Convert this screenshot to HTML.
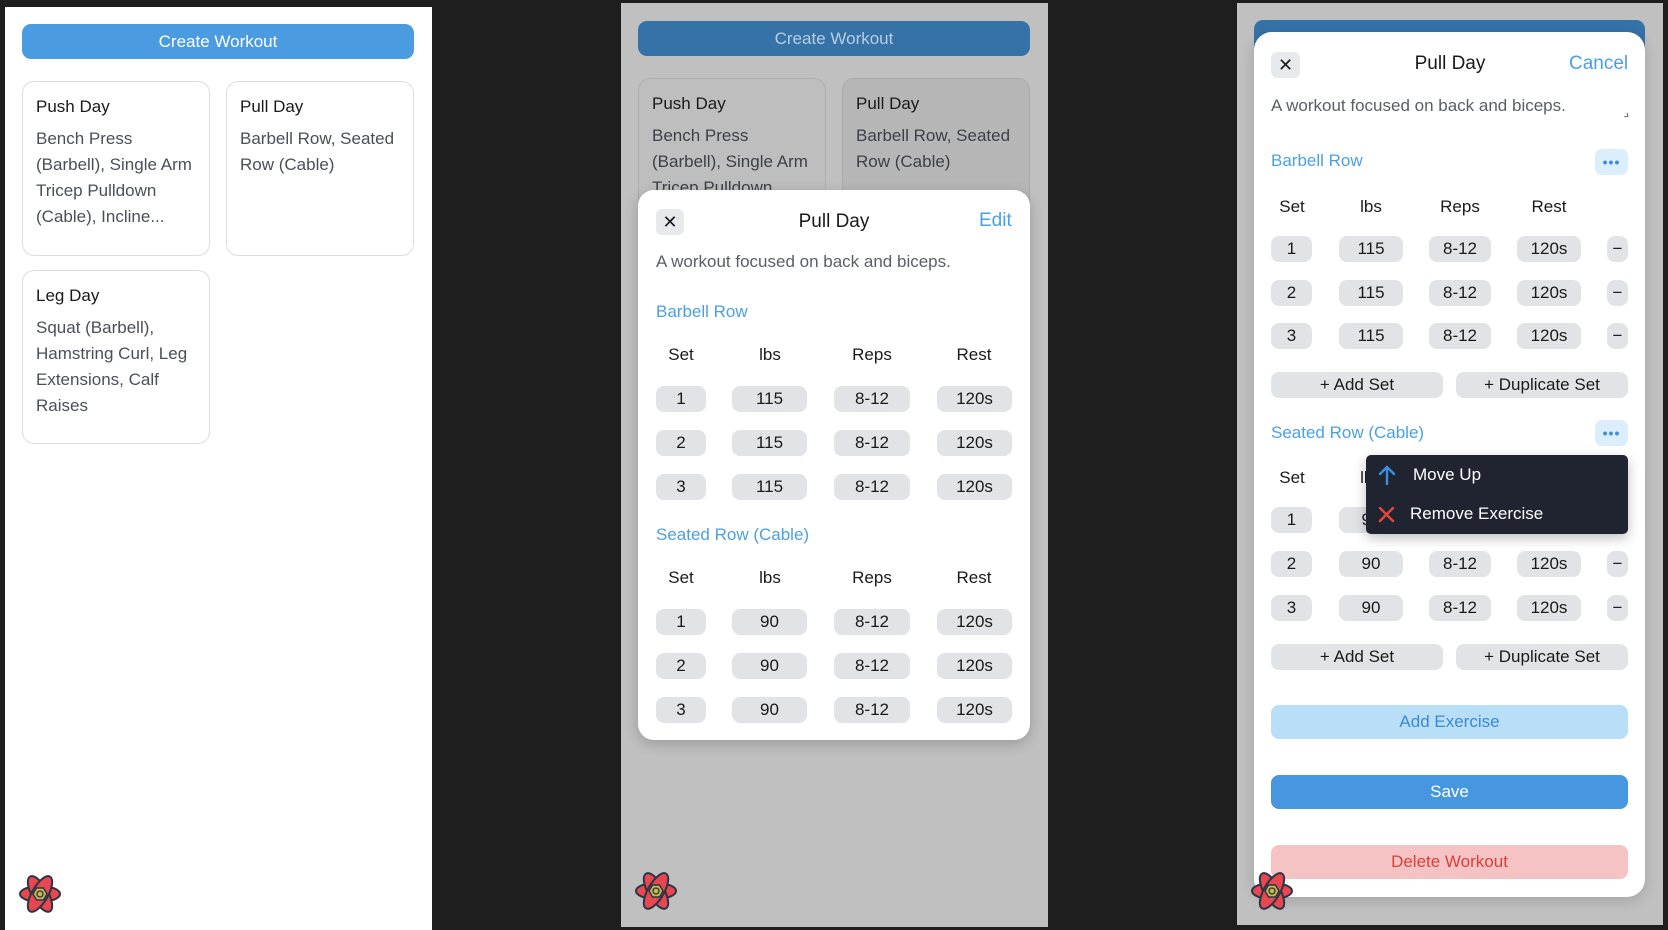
<!DOCTYPE html>
<html><head><meta charset="utf-8">
<style>
*{box-sizing:border-box;margin:0;padding:0}
body{width:1668px;height:930px;background:#1e1e1e;position:relative;overflow:hidden;font-family:"Liberation Sans",sans-serif;font-size:17px;color:#1a1a1a}
.a{position:absolute}
.c{position:absolute;display:flex;align-items:center;justify-content:center}
.pill{position:absolute;display:flex;align-items:center;justify-content:center;background:#e2e3e7;border-radius:8px;height:26px;font-size:17px;color:#1a1a1a}
.hd{position:absolute;font-size:17px;color:#1a1a1a;transform:translateX(-50%)}
.card{position:absolute;border:1.5px solid #dcdde0;border-radius:12px;background:#fff}
.ct{position:absolute;left:13px;top:15px;font-size:17px;color:#1a1a1a}
.cd{position:absolute;left:13px;top:44px;font-size:17px;line-height:26px;color:#4a4f5a;width:170px}
.blue{color:#4aa0e6}
</style></head><body>

<!-- PANEL 1 -->
<div class="a" style="left:5px;top:7px;width:427px;height:923px;background:#fff"></div>
<div class="c" style="left:22px;top:24px;width:392px;height:35px;background:#4a9be0;border-radius:9px;color:#fff;font-size:17px">Create Workout</div>
<div class="card" style="left:22px;top:81px;width:188px;height:175px"><div class="ct">Push Day</div><div class="cd">Bench Press (Barbell), Single Arm Tricep Pulldown (Cable), Incline...</div></div>
<div class="card" style="left:226px;top:81px;width:188px;height:175px"><div class="ct">Pull Day</div><div class="cd">Barbell Row, Seated Row (Cable)</div></div>
<div class="card" style="left:22px;top:270px;width:188px;height:174px"><div class="ct">Leg Day</div><div class="cd">Squat (Barbell), Hamstring Curl, Leg Extensions, Calf Raises</div></div>

<!-- PANEL 2 -->
<div class="a" style="left:621px;top:3px;width:427px;height:924px;background:#c0c0c0"></div>
<div class="c" style="left:638px;top:21px;width:392px;height:35px;background:#3572a8;border-radius:9px;color:#b9cde0;font-size:17px">Create Workout</div>
<div class="card" style="left:638px;top:78px;width:188px;height:175px;background:#bebebe;border-color:#aeaeae"><div class="ct">Push Day</div><div class="cd" style="color:#3c4048">Bench Press (Barbell), Single Arm Tricep Pulldown</div></div>
<div class="card" style="left:842px;top:78px;width:188px;height:175px;background:#b6b6b6;border-color:#aaa"><div class="ct">Pull Day</div><div class="cd" style="color:#3c4048">Barbell Row, Seated Row (Cable)</div></div>
<div class="a" style="left:638px;top:190px;width:392px;height:550px;background:#fff;border-radius:16px;box-shadow:0 4px 14px rgba(0,0,0,.2)"></div>
<div class="c" style="left:656px;top:209px;width:28px;height:26px;background:#e8e9ec;border-radius:6px;font-size:18px">✕</div>
<div class="hd" style="left:834px;top:211px;font-size:19px">Pull Day</div>
<div class="a blue" style="left:979px;top:210px;font-size:19px">Edit</div>
<div class="a" style="left:656px;top:252px;color:#5a5e66">A workout focused on back and biceps.</div>
<div class="a blue" style="left:656px;top:302px">Barbell Row</div>
<div class="hd" style="left:681px;top:345px">Set</div><div class="hd" style="left:770px;top:345px">lbs</div><div class="hd" style="left:872px;top:345px">Reps</div><div class="hd" style="left:974px;top:345px">Rest</div>
<div class="a blue" style="left:656px;top:525px">Seated Row (Cable)</div>
<div class="hd" style="left:681px;top:568px">Set</div><div class="hd" style="left:770px;top:568px">lbs</div><div class="hd" style="left:872px;top:568px">Reps</div><div class="hd" style="left:974px;top:568px">Rest</div>

<div class="pill" style="left:656px;top:386px;width:50px">1</div><div class="pill" style="left:732px;top:386px;width:75px">115</div><div class="pill" style="left:834px;top:386px;width:76px">8-12</div><div class="pill" style="left:937px;top:386px;width:75px">120s</div>
<div class="pill" style="left:656px;top:430px;width:50px">2</div><div class="pill" style="left:732px;top:430px;width:75px">115</div><div class="pill" style="left:834px;top:430px;width:76px">8-12</div><div class="pill" style="left:937px;top:430px;width:75px">120s</div>
<div class="pill" style="left:656px;top:474px;width:50px">3</div><div class="pill" style="left:732px;top:474px;width:75px">115</div><div class="pill" style="left:834px;top:474px;width:76px">8-12</div><div class="pill" style="left:937px;top:474px;width:75px">120s</div>
<div class="pill" style="left:656px;top:609px;width:50px">1</div><div class="pill" style="left:732px;top:609px;width:75px">90</div><div class="pill" style="left:834px;top:609px;width:76px">8-12</div><div class="pill" style="left:937px;top:609px;width:75px">120s</div>
<div class="pill" style="left:656px;top:653px;width:50px">2</div><div class="pill" style="left:732px;top:653px;width:75px">90</div><div class="pill" style="left:834px;top:653px;width:76px">8-12</div><div class="pill" style="left:937px;top:653px;width:75px">120s</div>
<div class="pill" style="left:656px;top:697px;width:50px">3</div><div class="pill" style="left:732px;top:697px;width:75px">90</div><div class="pill" style="left:834px;top:697px;width:76px">8-12</div><div class="pill" style="left:937px;top:697px;width:75px">120s</div>

<!-- PANEL 3 -->
<div class="a" style="left:1237px;top:3px;width:426px;height:922px;background:#c0c0c0"></div>
<div class="a" style="left:1254px;top:20px;width:391px;height:40px;background:#3572a8;border-radius:9px"></div>
<div class="a" style="left:1254px;top:32px;width:391px;height:865px;background:#fff;border-radius:18px;box-shadow:0 4px 14px rgba(0,0,0,.15)"></div>
<div class="c" style="left:1271px;top:52px;width:29px;height:26px;background:#e8e9ec;border-radius:6px;font-size:18px">✕</div>
<div class="hd" style="left:1450px;top:53px;font-size:19px">Pull Day</div>
<div class="a blue" style="left:1569px;top:53px;font-size:19px">Cancel</div>
<div class="a" style="left:1271px;top:96px;color:#5a5e66">A workout focused on back and biceps.</div>
<div class="a" style="left:1624px;top:113px;width:4px;height:4px;border-right:1px solid #666;border-bottom:1px solid #666;transform:rotate(-10deg)"></div>
<div class="a blue" style="left:1271px;top:151px">Barbell Row</div>
<div class="c" style="left:1595px;top:149px;width:33px;height:26px;background:#dcedfc;border-radius:7px;color:#3a8ee0;font-weight:bold;font-size:14px;letter-spacing:1px">•••</div>
<div class="hd" style="left:1292px;top:197px">Set</div><div class="hd" style="left:1371px;top:197px">lbs</div><div class="hd" style="left:1460px;top:197px">Reps</div><div class="hd" style="left:1549px;top:197px">Rest</div>

<div class="pill" style="left:1271px;top:236px;width:41px">1</div><div class="pill" style="left:1339px;top:236px;width:64px">115</div><div class="pill" style="left:1429px;top:236px;width:62px">8-12</div><div class="pill" style="left:1517px;top:236px;width:64px">120s</div><div class="pill" style="left:1607px;top:236px;width:21px">−</div>
<div class="pill" style="left:1271px;top:280px;width:41px">2</div><div class="pill" style="left:1339px;top:280px;width:64px">115</div><div class="pill" style="left:1429px;top:280px;width:62px">8-12</div><div class="pill" style="left:1517px;top:280px;width:64px">120s</div><div class="pill" style="left:1607px;top:280px;width:21px">−</div>
<div class="pill" style="left:1271px;top:323px;width:41px">3</div><div class="pill" style="left:1339px;top:323px;width:64px">115</div><div class="pill" style="left:1429px;top:323px;width:62px">8-12</div><div class="pill" style="left:1517px;top:323px;width:64px">120s</div><div class="pill" style="left:1607px;top:323px;width:21px">−</div>
<div class="pill" style="left:1271px;top:372px;width:172px">+ Add Set</div><div class="pill" style="left:1456px;top:372px;width:172px">+ Duplicate Set</div>

<div class="a blue" style="left:1271px;top:423px">Seated Row (Cable)</div>
<div class="c" style="left:1595px;top:420px;width:33px;height:26px;background:#dcedfc;border-radius:7px;color:#3a8ee0;font-weight:bold;font-size:14px;letter-spacing:1px">•••</div>
<div class="hd" style="left:1292px;top:468px">Set</div><div class="hd" style="left:1371px;top:468px">lbs</div>
<div class="pill" style="left:1271px;top:507px;width:41px">1</div><div class="pill" style="left:1339px;top:507px;width:64px">90</div>
<div class="pill" style="left:1271px;top:551px;width:41px">2</div><div class="pill" style="left:1339px;top:551px;width:64px">90</div><div class="pill" style="left:1429px;top:551px;width:62px">8-12</div><div class="pill" style="left:1517px;top:551px;width:64px">120s</div><div class="pill" style="left:1607px;top:551px;width:21px">−</div>
<div class="pill" style="left:1271px;top:595px;width:41px">3</div><div class="pill" style="left:1339px;top:595px;width:64px">90</div><div class="pill" style="left:1429px;top:595px;width:62px">8-12</div><div class="pill" style="left:1517px;top:595px;width:64px">120s</div><div class="pill" style="left:1607px;top:595px;width:21px">−</div>
<div class="pill" style="left:1271px;top:644px;width:172px">+ Add Set</div><div class="pill" style="left:1456px;top:644px;width:172px">+ Duplicate Set</div>

<div class="a" style="left:1366px;top:455px;width:262px;height:79px;background:#1f2430;border-radius:5px;box-shadow:0 4px 12px rgba(0,0,0,.25)"></div>
<svg class="a" style="left:1376px;top:464px" width="22" height="22" viewBox="0 0 22 22"><path d="M11 20V3M4 10l7-7 7 7" stroke="#3a8ee0" stroke-width="2.4" fill="none" stroke-linecap="round"/></svg>
<div class="a" style="left:1413px;top:465px;color:#fff">Move Up</div>
<svg class="a" style="left:1378px;top:506px" width="17" height="17" viewBox="0 0 17 17"><path d="M2 2l13 13M15 2L2 15" stroke="#e8453f" stroke-width="2.4" stroke-linecap="round"/></svg>
<div class="a" style="left:1410px;top:504px;color:#fff">Remove Exercise</div>

<div class="c" style="left:1271px;top:705px;width:357px;height:34px;background:#b9dff8;border-radius:8px;color:#3a8ad0">Add Exercise</div>
<div class="c" style="left:1271px;top:775px;width:357px;height:34px;background:#4797e0;border-radius:8px;color:#fff">Save</div>
<div class="c" style="left:1271px;top:845px;width:357px;height:34px;background:#f5c3c3;border-radius:8px;color:#d9403c">Delete Workout</div>

<!-- logos -->
<svg class="a" style="left:17px;top:871px" width="46" height="46" viewBox="-23 -23 46 46"><g fill="#e8474f" stroke="#2b3548" stroke-width="2"><ellipse rx="20" ry="8"/><ellipse rx="20" ry="8" transform="rotate(60)"/><ellipse rx="20" ry="8" transform="rotate(120)"/></g><polygon points="7,0 3.5,6 -3.5,6 -7,0 -3.5,-6 3.5,-6" fill="#c9b94a" stroke="#2b3548" stroke-width="1.5"/><circle r="3" fill="none" stroke="#2b3548" stroke-width="1.3"/></svg>
<svg class="a" style="left:633px;top:868px" width="46" height="46" viewBox="-23 -23 46 46"><g fill="#e8474f" stroke="#2b3548" stroke-width="2"><ellipse rx="20" ry="8"/><ellipse rx="20" ry="8" transform="rotate(60)"/><ellipse rx="20" ry="8" transform="rotate(120)"/></g><polygon points="7,0 3.5,6 -3.5,6 -7,0 -3.5,-6 3.5,-6" fill="#c9b94a" stroke="#2b3548" stroke-width="1.5"/><circle r="3" fill="none" stroke="#2b3548" stroke-width="1.3"/></svg>
<svg class="a" style="left:1249px;top:868px" width="46" height="46" viewBox="-23 -23 46 46"><g fill="#e8474f" stroke="#2b3548" stroke-width="2"><ellipse rx="20" ry="8"/><ellipse rx="20" ry="8" transform="rotate(60)"/><ellipse rx="20" ry="8" transform="rotate(120)"/></g><polygon points="7,0 3.5,6 -3.5,6 -7,0 -3.5,-6 3.5,-6" fill="#c9b94a" stroke="#2b3548" stroke-width="1.5"/><circle r="3" fill="none" stroke="#2b3548" stroke-width="1.3"/></svg>
</body></html>
